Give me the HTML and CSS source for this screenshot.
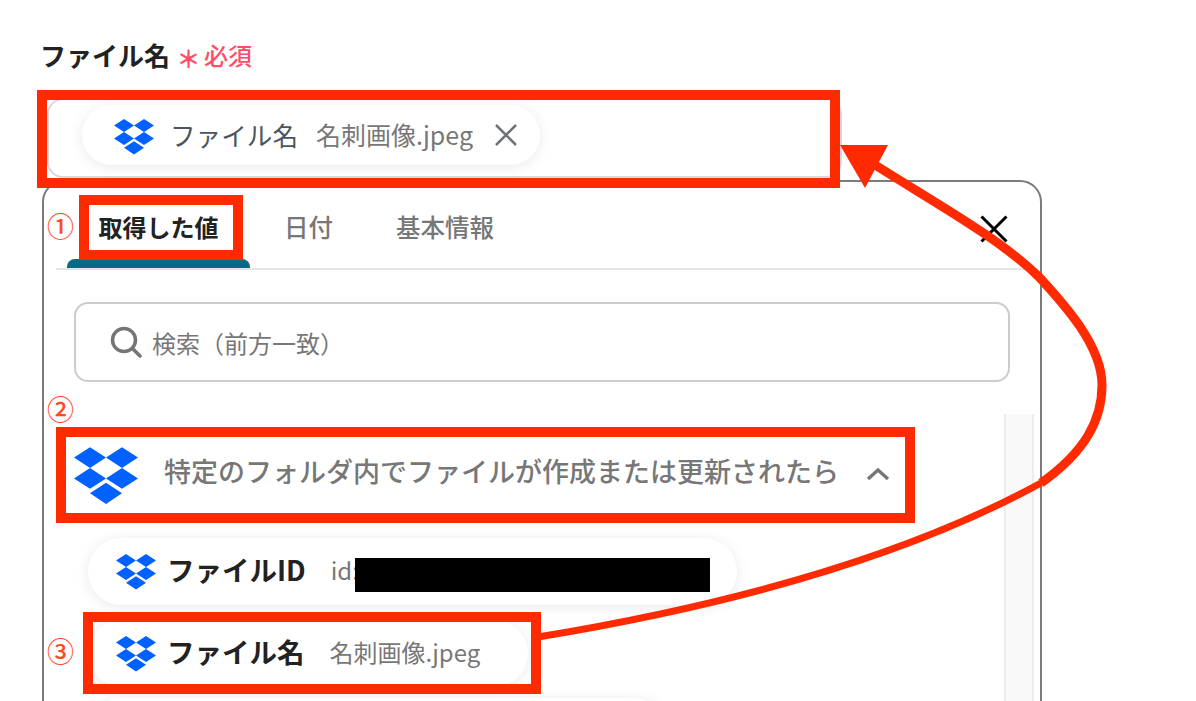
FILE: index.html
```html
<!DOCTYPE html>
<html lang="ja">
<head>
    <meta charset="UTF-8">
    <title>ファイル名</title>
    <link rel="stylesheet" href="styles.css">
</head>
<body>
    <svg width="0" height="0" class="defs">
        <symbol id="dropbox" viewBox="0 0 40 36">
            <path d="M10 0 0 6.5 10 13 20 6.5ZM30 0 20 6.5 30 13 40 6.5ZM0 19.500 10 26 20 19.500 10 13ZM30 13 20 19.500 30 26 40 19.500ZM10 28.800 20 35.500 30 28.800 20 22.200Z"/>
        </symbol>
    </svg>

    <div class="page">
        <div class="field-label">
            <span class="field-name">ファイル名</span>
            <span class="required-mark">＊</span>
            <span class="required-text">必須</span>
        </div>

        <div class="field-box">
            <div class="chip chip-selected">
                <svg class="icon-small"><use href="#dropbox"/></svg>
                <span class="chip-name-light">ファイル名</span>
                <span class="chip-value">名刺画像.jpeg</span>
                <svg class="chip-close" viewBox="0 0 24 24"><path d="M2 2 22 22M22 2 2 22"/></svg>
            </div>
        </div>

        <div class="panel">
            <div class="tabs">
                <div class="tab tab-active">取得した値</div>
                <div class="tab">日付</div>
                <div class="tab">基本情報</div>
                <svg class="panel-close" viewBox="0 0 28 28"><path d="M1.500 1.500 26.500 26.500M26.500 1.500 1.500 26.500"/></svg>
            </div>

            <div class="search">
                <svg class="search-icon" viewBox="0 0 32 32"><circle cx="14" cy="14" r="11.500"/><path d="M22.500 22.500 30 30"/></svg>
                <span>検索（前方一致）</span>
            </div>

            <div class="results">
                <div class="results-list">
                    <div class="group-header">
                        <svg class="icon-large"><use href="#dropbox"/></svg>
                        <span class="group-title">特定のフォルダ内でファイルが作成または更新されたら</span>
                        <svg class="chevron" viewBox="0 0 24 14"><path d="M2 12 12 3 22 12"/></svg>
                    </div>
                    <div class="chip chip-row chip-wide">
                        <svg class="icon-small"><use href="#dropbox"/></svg>
                        <span class="chip-name">ファイルID</span>
                        <span class="chip-value">id:</span>
                    </div>
                    <div class="chip chip-row chip-mid">
                        <svg class="icon-small"><use href="#dropbox"/></svg>
                        <span class="chip-name">ファイル名</span>
                        <span class="chip-value">名刺画像.jpeg</span>
                    </div>
                    <div class="chip chip-row chip-next"></div>
                </div>
                <div class="scroll-track"></div>
            </div>
        </div>

        <!-- annotations drawn over the screenshot -->
        <div class="redact"></div>
        <div class="red-box box-field"></div>
        <div class="red-box box-tab"></div>
        <div class="red-box box-group"></div>
        <div class="red-box box-chip"></div>
        <span class="step step-1">①</span>
        <span class="step step-2">②</span>
        <span class="step step-3">③</span>
        <svg class="arrow" viewBox="0 0 1196 701">
            <path class="arrow-tail" d="M538 637C720 607 900 560 1041 483"/>
            <path class="arrow-line" d="M1041 483C1085 452 1102 420 1102 385C1102 345 1062 302 1040 278C1000 238 930 200 872 163"/>
            <path class="arrow-head" d="M840 145 888 145 865 188Z"/>
        </svg>
    </div>
</body>
</html>
```

FILE: styles.css
```css
* {
    box-sizing: border-box;
}

html, body {
    margin: 0;
    height: 701px;
    overflow: hidden;
    background: #fff;
}

body {
    font-family: "Noto Sans CJK JP", "Noto Sans", sans-serif;
    color: #222;
}

.defs {
    position: absolute;
}

.page {
    position: relative;
    width: 1196px;
    height: 701px;
    overflow: hidden;
    padding: 35px 154px 0 42px;
}

.field-label {
    display: flex;
    align-items: center;
    height: 38px;
    margin-bottom: 25px;
}

.field-name {
    font-size: 26px;
    font-weight: 700;
    margin-left: -2px;
}

.required-mark {
    color: #ff4d67;
    font-size: 24px;
    font-weight: 700;
    margin: 6px 0 0 5px;
    width: 27px;
    text-align: center;
}

.required-text {
    color: #ff4d67;
    font-size: 24px;
    font-weight: 500;
    margin-left: 2px;
}

.field-box {
    width: 795px;
    margin: 2px 0 0 5px;
    height: 80px;
    padding: 5px 0 0 33px;
    border: 2px solid #d5d9e0;
    border-radius: 16px;
}

.chip {
    display: flex;
    align-items: center;
    background: #fff;
    border-radius: 34px;
    box-shadow: 0 2px 14px rgba(0, 0, 0, 0.09);
}

.chip-selected {
    width: 458px;
    height: 60px;
    padding-left: 32px;
}

.chip-selected span {
    margin-bottom: 2px;
}

.chip-selected .icon-small {
    margin-top: 4px;
}

.chip-row span {
    margin-bottom: 5px;
}

.icon-small {
    width: 40px;
    height: 36px;
    fill: #0061ff;
    flex: none;
}

.icon-large {
    width: 64px;
    height: 58px;
    margin-top: 4px;
    fill: #0061ff;
    flex: none;
}

.chip-name-light {
    font-size: 25.600px;
    color: #4a5560;
    margin-left: 16px;
}

.chip-name {
    font-size: 27.500px;
    font-weight: 700;
    color: #222;
    margin-left: 11px;
}

.chip-value {
    font-size: 25px;
    color: #777;
    margin-left: 18px;
}

.chip-row .chip-value {
    font-size: 24px;
    margin-left: 25px;
}

.chip-close {
    width: 24px;
    height: 24px;
    margin-left: 21px;
    fill: none;
    stroke: #6f7378;
    stroke-width: 2.500;
}

.panel {
    margin-top: 2px;
    height: 600px;
    border: 2px solid #7b7b7b;
    border-radius: 22px;
}

.tabs {
    position: relative;
    display: flex;
    height: 88px;
    margin: 0 8px 0 12px;
    padding-left: 11px;
    border-bottom: 2px solid #e5e5e5;
}

.tab {
    display: flex;
    align-items: center;
    justify-content: center;
    height: 86px;
    padding-top: 2px;
    margin-right: 63px;
    font-size: 24.500px;
    font-weight: 500;
    color: #777;
}

.tab-active {
    position: relative;
    width: 183px;
    margin-right: 34px;
    font-size: 24px;
    font-weight: 700;
    color: #222;
}

.tab-active::after {
    content: "";
    position: absolute;
    left: 0;
    right: 0;
    bottom: 0;
    height: 9px;
    background: #0a6a85;
    border-radius: 8px 8px 0 0;
}

.panel-close {
    position: absolute;
    right: 24px;
    top: 33px;
    width: 28px;
    height: 28px;
    fill: none;
    stroke: #000;
    stroke-width: 3;
}

.search {
    display: flex;
    align-items: center;
    height: 80px;
    margin: 32px 30px 0 30px;
    padding-left: 34px;
    border: 2px solid #ccc;
    border-radius: 14px;
    font-size: 24px;
    color: #777;
}

.search-icon {
    width: 32px;
    height: 32px;
    margin-right: 10px;
    fill: none;
    stroke: #757575;
    stroke-width: 3.500;
    stroke-linecap: round;
}

.results {
    display: flex;
    margin-top: 32px;
    margin-right: 6px;
}

.results-list {
    flex: 1;
    padding: 21px 0 0 14px;
}

.scroll-track {
    width: 30px;
    height: 300px;
    background: #f9f9f9;
    border-left: 2px solid #ececec;
    border-right: 2px solid #ececec;
}

.group-header {
    display: flex;
    align-items: center;
    height: 78px;
    padding-left: 16px;
    margin-bottom: 25px;
}

.group-title {
    margin: 0 0 8px 26px;
    font-size: 27px;
    font-weight: 500;
    color: #777;
    white-space: nowrap;
}

.chevron {
    width: 24px;
    height: 14px;
    margin-left: 27px;
    fill: none;
    stroke: #777;
    stroke-width: 3.500;
    flex: none;
}

.chip-row {
    height: 67px;
    padding-left: 28px;
    margin: 0 0 15px 30px;
}

.chip-wide {
    width: 649px;
}

.chip-mid {
    width: 440px;
    margin-bottom: 11px;
}

.chip-next {
    width: 580px;
}

/* annotations */
.redact {
    position: absolute;
    left: 355px;
    top: 558px;
    width: 355px;
    height: 34px;
    background: #000;
}

.red-box {
    position: absolute;
    border: 10px solid #ff2a00;
}

.box-field {
    left: 37px;
    top: 90px;
    width: 803px;
    height: 98px;
}

.box-tab {
    left: 79px;
    top: 195px;
    width: 164px;
    height: 65px;
}

.box-group {
    left: 56px;
    top: 427px;
    width: 859px;
    height: 96px;
}

.box-chip {
    left: 83px;
    top: 612px;
    width: 458px;
    height: 82px;
}

.step {
    position: absolute;
    left: 47px;
    font-size: 27px;
    line-height: 28px;
    font-weight: 500;
    color: #ff4a2a;
}

.step-1 { top: 212px; }
.step-2 { top: 395px; }
.step-3 { top: 637px; }

.arrow {
    position: absolute;
    left: 0;
    top: 0;
    width: 1196px;
    height: 701px;
}

.arrow-tail {
    fill: none;
    stroke: #ff2a00;
    stroke-width: 7;
}

.arrow-line {
    fill: none;
    stroke: #ff2a00;
    stroke-width: 9;
}

.arrow-head {
    fill: #ff2a00;
}
```
